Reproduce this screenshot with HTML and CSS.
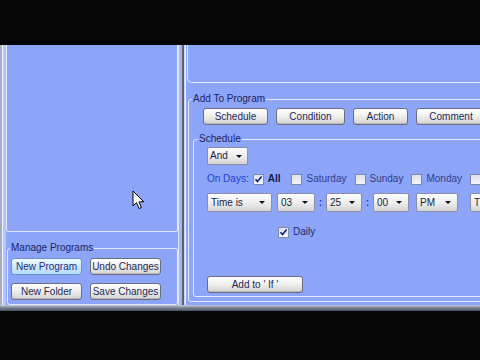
FILE: index.html
```html
<!DOCTYPE html>
<html>
<head>
<meta charset="utf-8">
<link rel="stylesheet" href="styles.css">
</head>
<body>
<div class="letterbox-top"></div>
<div class="app">
  <div class="main">
    <div class="left">
      <div class="tree"></div>
      <fieldset class="group manage">
        <legend>Manage Programs</legend>
        <div class="manage-grid">
          <button class="btn hot">New Program</button>
          <button class="btn">Undo Changes</button>
          <button class="btn">New Folder</button>
          <button class="btn">Save Changes</button>
        </div>
      </fieldset>
    </div>
    <div class="splitter"></div>
    <div class="right">
      <div class="listbox"></div>
      <fieldset class="group add">
        <legend>Add To Program</legend>
        <div class="add-buttons">
          <button class="btn b-schedule">Schedule</button>
          <button class="btn b-condition">Condition</button>
          <button class="btn b-action">Action</button>
          <button class="btn b-comment">Comment</button>
        </div>
        <fieldset class="group sched">
          <legend>Schedule</legend>
          <div class="sched-body">
            <div class="sel sel-and">And<i></i></div>
            <div class="days">
              <span class="days-label">On Days:</span>
              <span class="cb checked"><svg viewBox="0 0 11 11" width="11" height="11"><path d="M2.5 5.2 L4.5 7.5 L8.6 2.6" fill="none" stroke="#16207a" stroke-width="1.6"/></svg></span>
              <span class="day-all">All</span>
              <span class="cb"></span><span class="day">Saturday</span>
              <span class="cb"></span><span class="day">Sunday</span>
              <span class="cb"></span><span class="day">Monday</span>
              <span class="cb"></span>
            </div>
            <div class="times">
              <div class="sel sel-cond">Time is<i></i></div>
              <div class="sel sel-num first">03<i></i></div>
              <span class="colon">:</span>
              <div class="sel sel-num">25<i></i></div>
              <span class="colon">:</span>
              <div class="sel sel-num">00<i></i></div>
              <div class="sel sel-ampm">PM<i></i></div>
              <div class="sel sel-more">T</div>
            </div>
            <div class="daily">
              <span class="cb checked"><svg viewBox="0 0 11 11" width="11" height="11"><path d="M2.5 5.2 L4.5 7.5 L8.6 2.6" fill="none" stroke="#16207a" stroke-width="1.6"/></svg></span>
              <span class="daily-label">Daily</span>
            </div>
            <button class="btn b-addif">Add to ' If '</button>
          </div>
        </fieldset>
      </fieldset>
    </div>
    <svg class="cursor" width="14" height="21" viewBox="0 0 14 21"><path d="M1 1 L1 16 L4.5 12.6 L7 18.5 L9.4 17.5 L7 11.8 L11.8 11.8 Z" fill="#fff" stroke="#000" stroke-width="1" stroke-linejoin="round"/></svg>
  </div>
  <div class="statusbar"></div>
</div>
<div class="letterbox-bottom"></div>
</body>
</html>
```
FILE: styles.css
```css
html, body {
  margin: 0;
  padding: 0;
  background: #040404;
}
body {
  width: 480px;
  height: 360px;
  overflow: hidden;
  font-family: "Liberation Sans", Arial, sans-serif;
  font-size: 10px;
  line-height: 12px;
  color: #1c2660;
}
.letterbox-top { height: 45px; background: #050505; }
.letterbox-bottom { height: 49px; background: #050505; }

.app {
  height: 266px;
  display: flex;
  flex-direction: column;
  background: #8da5f8;
}
.main {
  position: relative;
  height: 260px;
  display: flex;
  background: linear-gradient(to right, #a4aec8 0 2px, #f2f5ff 2px 3px, #b6c5f6 3px 6px, #8da5f8 6px);
}
.statusbar {
  height: 6px;
  background: linear-gradient(#c6cede, #7c8496 45%, #4a505e);
}

/* left column */
.left {
  width: 178px;
  padding-left: 6px;
  box-sizing: border-box;
  display: flex;
  flex-direction: column;
}
.tree {
  height: 187px;
  box-sizing: border-box;
  border: 1px solid #e2e9ff;
  border-top: none;
  border-radius: 0 0 3px 3px;
}

.group {
  margin: 0;
  padding: 0;
  border: 1px solid #e2e9ff;
  border-radius: 3px;
  min-inline-size: 0;
}
.group > legend {
  padding: 0 1px;
  line-height: 12px;
  height: 12px;
  color: #1a2462;
}
.manage {
  margin: 10px 0 0 1px;
  padding: 4px 3px 4px 3px;
}
.manage > legend { margin-left: -1px; }
.manage-grid {
  display: grid;
  grid-template-columns: 71px 71px;
  column-gap: 8px;
  row-gap: 8px;
}

/* buttons */
.btn {
  height: 17px;
  margin: 0;
  padding: 0;
  box-sizing: border-box;
  border: 1px solid #6c6e7e;
  border-radius: 3px;
  background: linear-gradient(#ffffff, #f0f0ee 45%, #d2d2d0);
  box-shadow: inset 0 -1px 0 #b8b8bc;
  font-family: "Liberation Sans", Arial, sans-serif;
  font-size: 10px;
  line-height: 15px;
  color: #242a58;
  text-align: center;
  white-space: nowrap;
}
.btn.hot {
  border-color: #6a90c8;
  background: linear-gradient(#f2faff, #cfeaff 50%, #b4dcfa);
  box-shadow: none;
  color: #1e2e78;
}

/* splitter */
.splitter {
  width: 8px;
  background: linear-gradient(to right, #dfe7ff 0 1px, #aab6dc 1px 4px, #5a6072 4px 6px, #c9d4f6 6px 7px, #eef2ff 7px 8px);
}

/* right column */
.right {
  flex: 1;
  min-width: 0;
  overflow: hidden;
  display: flex;
  flex-direction: column;
}
.listbox {
  height: 38px;
  box-sizing: border-box;
  border-left: 1px solid #e2e9ff;
  border-bottom: 1px solid #e2e9ff;
  border-bottom-left-radius: 5px;
  margin-left: 1px;
}
.add {
  width: 330px;
  margin: 10px 0 0 2px;
  padding: 0;
}
.add > legend { margin-left: 3px; }
.add-buttons {
  display: flex;
  gap: 8px;
  margin: 3px 0 0 14px;
}
.b-schedule { width: 65px; }
.b-condition { width: 69px; }
.b-action { width: 55px; }
.b-comment { width: 70px; }

.sched {
  margin: 8px 0 4px 4px;
  padding: 2px 0 3px 0;
}
.sched > legend { margin-left: 4px; }
.sched-body { margin-left: 13px; }

/* combo boxes */
.sel {
  height: 19px;
  box-sizing: border-box;
  display: flex;
  align-items: center;
  padding-left: 3px;
  border: 1px solid #8a8fa6;
  border-radius: 2px;
  background: linear-gradient(#fdfdfd, #ececec 55%, #d4d4d4);
  color: #1a1e3e;
  white-space: nowrap;
}
.sel > i {
  margin-left: auto;
  margin-right: 6px;
  width: 0;
  height: 0;
  border-left: 3px solid transparent;
  border-right: 3px solid transparent;
  border-top: 3px solid #111;
}
.sel-and { width: 41px; height: 18px; padding-left: 2px; }
.sel-and > i { margin-right: 5px; }

.days {
  display: flex;
  align-items: center;
  height: 14px;
  margin-top: 7px;
  white-space: nowrap;
}
.days-label { color: #2140c8; margin-right: 4px; }
.cb {
  width: 11px;
  height: 11px;
  flex: none;
  box-sizing: border-box;
  border: 1px solid #8088a8;
  background: linear-gradient(#dde2ee, #f4f6fb);
  display: inline-flex;
  margin-right: 4px;
}
.cb svg { display: block; margin: -1px; }
.day-all { font-weight: bold; color: #121a4c; margin-right: 11px; }
.day { color: #303c88; margin-right: 8px; }

.times {
  display: flex;
  align-items: center;
  margin-top: 7px;
}
.sel-cond { width: 65px; }
.sel-num { width: 36px; }
.sel-num.first { width: 38px; margin-left: 5px; }
.colon {
  width: 11px;
  text-align: center;
  color: #1c3ad6;
  font-weight: bold;
}
.sel-ampm { width: 42px; margin-left: 7px; }
.sel-more { width: 42px; margin-left: 12px; }

.daily {
  display: flex;
  align-items: center;
  height: 12px;
  margin: 14px 0 0 71px;
}
.daily-label { color: #1e2a70; }

.b-addif {
  display: block;
  width: 96px;
  margin-top: 38px;
}

/* mouse pointer floating over the tree */
.cursor {
  position: absolute;
  left: 132px;
  top: 145px;
}
```
